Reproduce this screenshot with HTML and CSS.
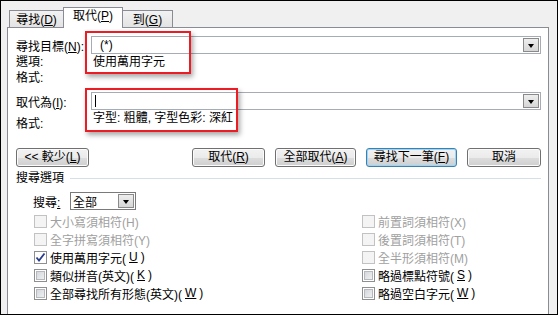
FILE: index.html
```html
<!DOCTYPE html>
<html lang="zh-Hant">
<head>
  <meta charset="UTF-8">
  <title>尋找及取代</title>
  <link rel="stylesheet" href="styles.css">
</head>
<body>
  <div class="dialog">
    <div class="tabs">
      <div class="tab">尋找(<u>D</u>)</div>
      <div class="tab active">取代(<u>P</u>)</div>
      <div class="tab">到(<u>G</u>)</div>
    </div>

    <div class="panel">
      <div class="field">
        <span class="label">尋找目標(<u>N</u>):</span>
        <div class="combo">
          <span class="combo-text indent">(*)</span>
          <span class="drop"><span class="arrow"></span></span>
        </div>
      </div>
      <div class="info"><span class="label wide">選項:</span><span>使用萬用字元</span></div>
      <div class="info"><span class="label wide">格式:</span></div>

      <div class="field second">
        <span class="label">取代為(<u>I</u>):</span>
        <div class="combo">
          <span class="combo-text"><span class="caret"></span></span>
          <span class="drop"><span class="arrow"></span></span>
        </div>
      </div>
      <div class="format-row">
        <span class="label wide low">格式:</span>
        <span>字型: 粗體, 字型色彩: 深紅</span>
      </div>

      <div class="buttons">
        <button class="btn less">&lt;&lt; 較少(<u>L</u>)</button>
        <button class="btn replace">取代(<u>R</u>)</button>
        <button class="btn replace-all">全部取代(<u>A</u>)</button>
        <button class="btn find-next default">尋找下一筆(<u>F</u>)</button>
        <button class="btn cancel">取消</button>
      </div>

      <div class="section-title">
        <span>搜尋選項</span>
        <span class="rule"></span>
      </div>

      <div class="search-row">
        <span class="search-label">搜尋<u>:</u></span>
        <div class="select">
          <span class="select-text">全部</span>
          <span class="select-drop"><span class="arrow"></span></span>
        </div>
      </div>

      <div class="options">
        <label class="opt disabled"><span class="box"></span>大小寫須相符(H)</label>
        <label class="opt disabled"><span class="box"></span>前置詞須相符(X)</label>
        <label class="opt disabled"><span class="box"></span>全字拼寫須相符(Y)</label>
        <label class="opt disabled"><span class="box"></span>後置詞須相符(T)</label>
        <label class="opt"><span class="box checked"><svg width="11" height="11" viewBox="0 0 11 11"><path d="M1.5 5.5 L4 8.5 L9.5 1.5" fill="none" stroke="#2a3d8c" stroke-width="1.8"/></svg></span>使用萬用字元(<u>U</u>)</label>
        <label class="opt disabled"><span class="box"></span>全半形須相符(M)</label>
        <label class="opt"><span class="box"></span>類似拼音(英文)(<u>K</u>)</label>
        <label class="opt"><span class="box"></span>略過標點符號(<u>S</u>)</label>
        <label class="opt"><span class="box"></span>全部尋找所有形態(英文)(<u>W</u>)</label>
        <label class="opt"><span class="box"></span>略過空白字元(<u>W</u>)</label>
      </div>

      <!-- annotation boxes drawn over the dialog -->
      <div class="mark mark-find"></div>
      <div class="mark mark-replace"></div>
    </div>
  </div>
</body>
</html>
```

FILE: styles.css
```css
body {
  margin: 0;
  font-family: "Liberation Sans", "Noto Sans CJK TC", sans-serif;
  font-size: 12px;
  color: #000;
  background: #f0f0f0;
}

u {
  text-decoration: underline;
  text-underline-offset: 1px;
}

.dialog {
  width: 558px;
  height: 315px;
  box-sizing: border-box;
  border: 1px solid #000;
  background: #f0f0f0;
  padding: 6px 8px 0 6px;
  display: flex;
  flex-direction: column;
  overflow: hidden;
}

/* tabs */
.tabs {
  display: flex;
  align-items: flex-end;
  height: 21px;
  margin: 0 0 -1px 2px;
  position: relative;
  z-index: 1;
}

.tab {
  box-sizing: border-box;
  height: 17px;
  margin-bottom: 1px;
  border: 1px solid #898c95;
  border-bottom: none;
  background: linear-gradient(#f2f2f2, #e3e3e3);
  display: flex;
  align-items: center;
  justify-content: center;
  line-height: 14px;
  padding-top: 1px;
}

.tab:nth-child(1) { width: 55px; }
.tab:nth-child(3) { width: 51px; margin-left: -1px; }

.tab.active {
  width: 60px;
  height: 21px;
  margin-bottom: 0;
  margin-left: -1px;
  background: #fff;
  padding-top: 0;
  padding-bottom: 4px;
}

/* main panel */
.panel {
  flex: 1;
  position: relative;
  background: #fff;
  border: 1px solid #898c95;
  border-bottom: none;
  padding: 8px 7px 0 8px;
}

.field {
  display: flex;
  align-items: center;
  height: 18px;
}

.field.second {
  margin-top: 6px;
}

.label {
  width: 75px;
  flex-shrink: 0;
  white-space: nowrap;
}

.label.wide {
  width: 77px;
}

.combo {
  flex: 1;
  height: 18px;
  box-sizing: border-box;
  border: 1px solid #a5acb5;
  display: flex;
  align-items: center;
  justify-content: space-between;
}

.combo-text {
  padding-left: 3px;
  display: flex;
  align-items: center;
}

.combo-text.indent {
  padding-left: 8px;
}

.caret {
  width: 1px;
  height: 12px;
  background: #000;
}

.drop,
.select-drop {
  width: 16px;
  height: 14px;
  box-sizing: border-box;
  margin-right: 1px;
  border: 1px solid #8a8a8a;
  background: linear-gradient(#eeeeee, #d6d6d6);
  display: flex;
  align-items: center;
  justify-content: center;
}

.arrow {
  width: 0;
  height: 0;
  border-left: 3.5px solid transparent;
  border-right: 3.5px solid transparent;
  border-top: 4px solid #000;
  margin-top: 1px;
}

.info {
  display: flex;
  line-height: 16px;
  height: 16px;
}

.format-row {
  display: flex;
  align-items: flex-start;
  line-height: 16px;
  height: 22px;
}

.label.low {
  padding-top: 6px;
}

/* buttons */
.buttons {
  display: flex;
  gap: 10px;
  margin-top: 16px;
}

.btn {
  height: 19px;
  box-sizing: border-box;
  padding: 0;
  font: inherit;
  line-height: 15px;
  color: #000;
  border: 1px solid #707070;
  border-radius: 3px;
  background: linear-gradient(#f2f2f2 0%, #ebebeb 50%, #dddddd 51%, #cfcfcf 100%);
  box-shadow: inset 0 0 0 1px #fbfbfb;
}

.btn.less { width: 73px; margin-right: auto; }
.btn.replace { width: 73px; }
.btn.replace-all { width: 81px; }
.btn.find-next { width: 91px; }
.btn.cancel { width: 74px; }

.btn.default {
  border-color: #3c7fb1;
  box-shadow: inset 0 0 0 1px #9ad6f6;
}

/* search options */
.section-title {
  display: flex;
  align-items: center;
  gap: 6px;
  margin-top: 3px;
  line-height: 16px;
}

.rule {
  flex: 1;
  height: 1px;
  background: #d5dfe5;
}

.search-row {
  display: flex;
  align-items: center;
  margin: 6px 0 0 17px;
  height: 18px;
}

.search-label {
  width: 37px;
}

.select {
  width: 66px;
  height: 18px;
  box-sizing: border-box;
  border: 1px solid #7a7a7a;
  display: flex;
  align-items: center;
  justify-content: space-between;
}

.select-text {
  padding-left: 2px;
}

.options {
  display: grid;
  grid-template-columns: 328px 1fr;
  grid-auto-rows: 18px;
  margin: 2px 0 0 18px;
}

.opt {
  display: flex;
  align-items: center;
  gap: 3px;
  white-space: nowrap;
}

.box {
  width: 13px;
  height: 13px;
  box-sizing: border-box;
  border: 1px solid #8e8f8f;
  background: linear-gradient(135deg, #cdd0d5, #f7f7f7);
  box-shadow: inset 0 0 0 1px #fff, inset 0 0 0 2px #b5b9bf;
  display: flex;
  align-items: center;
  justify-content: center;
}

.box.checked {
  background: #fff;
  box-shadow: none;
}

.opt.disabled {
  color: #a0a0a0;
}

.opt.disabled .box {
  border-color: #c2c2c2;
  background: #f4f4f4;
  box-shadow: none;
}

/* red annotation marks */
.mark {
  position: absolute;
  box-sizing: border-box;
  border: 2px solid #ec1c24;
  box-shadow: 2px 3px 5px rgba(0, 0, 0, 0.35);
}

.mark-find {
  left: 77px;
  top: 3px;
  width: 106px;
  height: 43px;
}

.mark-replace {
  left: 77px;
  top: 60px;
  width: 153px;
  height: 44px;
}
```
